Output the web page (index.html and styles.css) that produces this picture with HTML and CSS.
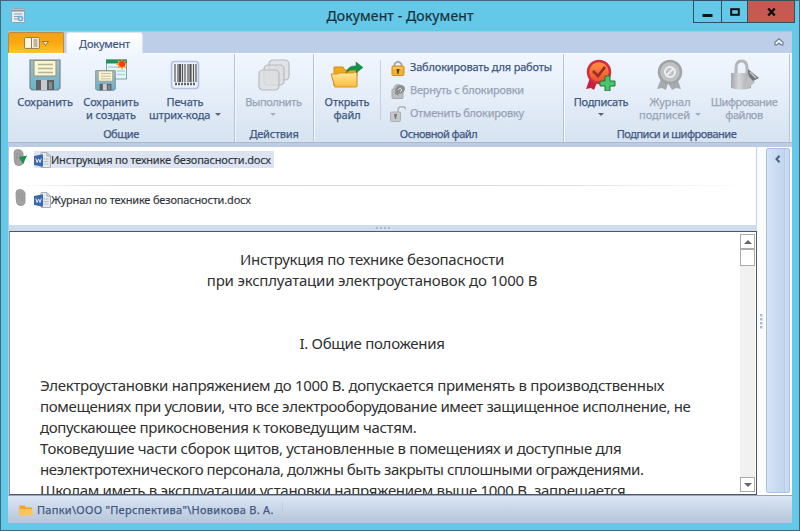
FILE: index.html
```html
<!DOCTYPE html>
<html lang="ru">
<head>
<meta charset="utf-8">
<title>Документ - Документ</title>
<link rel="stylesheet" href="styles.css">
</head>
<body>
<svg width="0" height="0" class="defs">
  <defs>
    <linearGradient id="steel" x1="0" y1="0" x2="0" y2="1"><stop offset="0" stop-color="#a9bcc4"/><stop offset="1" stop-color="#63b4cb"/></linearGradient>
    <linearGradient id="gold" x1="0" y1="0" x2="0" y2="1"><stop offset="0" stop-color="#ffe9a3"/><stop offset="1" stop-color="#fdbd3c"/></linearGradient>
    <linearGradient id="rosette" x1="0" y1="0" x2="0" y2="1"><stop offset="0" stop-color="#ff9445"/><stop offset="1" stop-color="#ee4b28"/></linearGradient>
    <linearGradient id="silver" x1="0" y1="0" x2="1" y2="0"><stop offset="0" stop-color="#a4a7ab"/><stop offset=".4" stop-color="#d5d7da"/><stop offset="1" stop-color="#9fa2a6"/></linearGradient>
    <symbol id="floppy" viewBox="0 0 32 32">
      <path d="M1 1h30v28l-2 2H3l-2-2z" fill="url(#steel)" stroke="#75868e" stroke-width="1.2"/>
      <path d="M5 1.5h22V17H5z" fill="#fbf6d0" stroke="#8c8f83"/>
      <path d="M9 5.500h15M9 9.500h15M9 13.500h15" stroke="#b5b39c" stroke-width="1.300"/>
      <path d="M7 21h18v10H7z" fill="#5d6164"/><path d="M12 21h6v10h-6z" fill="#c7cbce"/><path d="M20 23h3v7h-3z" fill="#8a8e91"/>
    </symbol>
    <symbol id="word" viewBox="0 0 17 16">
      <path d="M7 3V.5h6l3.500 3.500v11.500H7z" fill="#e6e8ea" stroke="#a8b0ba"/><path d="M13 1v3h3.500" fill="none" stroke="#9fa8b3"/>
      <path d="M9.500 7h5M9.500 9.500h5M9.500 12h5" stroke="#b6c0cc"/>
      <path d="M0 4l9-1.700v12.400L0 13z" fill="#3a68ac"/><path d="M1.800 6.500l1.300 4 1.500-3.500 1.400 3.500 1.300-4" fill="none" stroke="#e4ecf8" stroke-width="1"/>
    </symbol>
    <symbol id="clip" viewBox="0 0 11 17">
      <path d="M1 4q0-3.500 3.500-3.500Q9 .5 10 4v8.500q0 4-4.300 4-3.700 0-4.200-3.500z" fill="#a3a3a3" stroke="#8c8c8c" stroke-width=".8"/>
      <path d="M4 4v6M7 4v8" stroke="#8f8f8f" stroke-width="1"/>
    </symbol>
  </defs>
</svg>
<div class="window">
  <header class="titlebar">
    <svg class="appicon" width="14" height="15" viewBox="0 0 14 15"><rect x=".5" y=".5" width="13" height="14" rx="1" fill="#e7edef" stroke="#8fa8b3"/><path d="M1 2.500h12" stroke="#7e98a5" stroke-width="2"/><path d="M3 6h8M3 8.500h5M3 11h4" stroke="#8b9fab"/><circle cx="9.500" cy="10.500" r="2" fill="none" stroke="#6aa8ea" stroke-width="1.500"/></svg>
    <h1>Документ - Документ</h1>
    <div class="controls">
      <span class="min"><svg width="11" height="12"><path d="M.5 9.500h10" stroke="#111" stroke-width="3"/></svg></span>
      <span class="max"><svg width="10" height="8"><rect x="1.200" y="1.200" width="7.600" height="5.600" fill="none" stroke="#111" stroke-width="2"/></svg></span>
      <span class="close"><svg width="9" height="8" viewBox="0 0 9 8"><path d="M1.200.5l6.600 7M7.800.5l-6.600 7" stroke="#111" stroke-width="2.400"/></svg></span>
    </div>
  </header>
  <nav class="tabs">
    <div class="menu"><svg width="26" height="12" viewBox="0 0 26 12"><rect x=".6" y=".6" width="14.800" height="10.800" rx="1" fill="#fff7dd" stroke="#8e7950"/><path d="M7.500 1v10" stroke="#8e7950"/><path d="M9.500 3h4M9.500 5h4M9.500 7h4M9.500 9h4" stroke="#77705f"/><path d="M18.500 4.500h6l-3 4z" fill="#ffe39a" stroke="#8e7950"/></svg></div>
    <div class="tab"><span>Документ</span></div>
    <svg class="collapse" width="10" height="8" viewBox="0 0 10 8"><path d="M1 4.200l4-3.500 4 3.500v2.600H7L5 5 3 6.800H1z" fill="#f4f7fc" stroke="#75829a" stroke-width="1.200"/></svg>
  </nav>
  <section class="ribbon">
    <div class="group g1">
      <div class="buttons">
        <div class="btn"><svg width="32" height="32"><use href="#floppy"/></svg><p>Сохранить</p></div>
        <div class="btn"><svg width="32" height="32" viewBox="0 0 32 32"><rect x="11.500" y="1" width="20" height="19" fill="#e7f6f7" stroke="#6ca9b2"/><path d="M11 .5h21v4H11z" fill="#248e5c"/><path d="M13 8h14M22 12h8M22 15.500h8" stroke="#a9d8df" stroke-width="1.500"/><path d="M27 0l1.300 2.700L31 1l-.8 3L33 5l-2.800 1.500L31 9.500l-2.700-1.200L27 11l-1.500-2.700-3 1.200 1-3L20.500 5l3-1-1-3 3 1.700z" fill="#ff9a27"/><circle cx="27" cy="5" r="3" fill="#fa391a"/><svg x="0" y="11" width="21" height="21"><use href="#floppy"/></svg></svg><p>Сохранить<br>и создать</p></div>
        <div class="btn"><svg width="30" height="32" viewBox="0 0 30 32"><rect x="1.500" y="2.500" width="27" height="27" rx="3" fill="#eef1fa" stroke="#b0c1e3" stroke-width="1.600"/><path d="M5 5v18M8 5v18M12.500 5v18M15 5v18M18 5v18M23.500 5v18M26 5v18" stroke="#565656" stroke-width="1.200"/><path d="M10 5v18M20.500 5v18" stroke="#565656" stroke-width="2.200"/><path d="M5 25h21" stroke="#666" stroke-width="2.600" stroke-dasharray="2 1"/></svg><p>Печать<br>штрих-кода <i class="arrow wide"></i></p></div>
      </div>
      <div class="caption">Общие</div>
    </div>
    <div class="group g2">
      <div class="buttons">
        <div class="btn off"><svg width="32" height="32" viewBox="0 0 32 32"><g fill="#dcdedf" fill-opacity=".75" stroke="#b7babd" stroke-width="1.200"><rect x="11" y="1" width="20" height="20" rx="4"/><rect x="6" y="6" width="20" height="20" rx="4"/><rect x="1" y="11" width="20" height="20" rx="4"/></g></svg><p>Выполнить<br><i class="arrow"></i></p></div>
      </div>
      <div class="caption">Действия</div>
    </div>
    <div class="group g3">
      <div class="buttons">
        <div class="btn"><svg width="32" height="32" viewBox="0 0 32 32"><path d="M3 27V8h9l2 3h12v6" fill="#efaa1c" stroke="#d18d1b"/><path d="M0 15h6l2-1h14l1-1h3v14l-1 1H4z" fill="url(#gold)" stroke="#d9921f" stroke-width="1.100"/><path d="M15 14q2-8 10-7V3l7 5.500-7 5.500v-3q-6-1-10 3z" fill="#129343" stroke="#2a7b49" stroke-width=".5"/></svg><p>Открыть<br>файл</p></div>
        <div class="rows">
          <div class="row"><svg width="16" height="16" viewBox="0 0 16 16"><path d="M4.500 7V4q3.500-4.500 7 0v3" fill="none" stroke="#a6a9ac" stroke-width="2"/><rect x="2" y="6" width="12" height="9.500" rx="1" fill="#f3b12f" stroke="#d28d23"/><path d="M3 8h10" stroke="#ffd777"/><path d="M6.500 9h3l-1 5h-1z" fill="#553f20"/></svg><span class="r1">Заблокировать для работы</span></div>
          <div class="row off"><svg width="16" height="16" viewBox="0 0 16 16"><path d="M4.500 7V4q3.500-4.500 7 0v3" fill="none" stroke="#b3b5b8" stroke-width="2"/><rect x="2" y="6" width="11" height="9.500" rx="1" fill="#bebfc1" stroke="#a5a7a9"/><path d="M5 9q0-7 5-7 5 0 5 4-1 5-7 5l1 2-4-2z" fill="#8d8f91"/><path d="M8 7l2-2 2 2-2 2" stroke="#ddd" fill="none"/></svg><span class="r2">Вернуть с блокировки</span></div>
          <div class="row off"><svg width="16" height="16" viewBox="0 0 16 16"><path d="M8 7V3q1-2.500 4-2.500t4 3" fill="none" stroke="#b8babc" stroke-width="1.800"/><rect x=".5" y="6" width="10" height="9.500" rx="1" fill="#c6c7c9" stroke="#acaeb0"/><path d="M4 8h3l-1 5H5z" fill="#777"/></svg><span class="r2">Отменить блокировку</span></div>
        </div>
      </div>
      <div class="caption">Основной файл</div>
    </div>
    <div class="group g4">
      <div class="buttons">
        <div class="btn"><svg width="32" height="32" viewBox="0 0 32 32"><path d="M5 19L1 30l5-1 3 2 4-10zM20 20l2 10 4-5-3-8z" fill="#c71f3d"/><circle cx="14" cy="13" r="11" fill="url(#rosette)" stroke="#d12d3e" stroke-width="2.500"/><path d="M8 12l5 5 7-9" fill="none" stroke="#972d28" stroke-width="2.800"/><path d="M20 17h5v5h5v5h-5v5h-5v-5h-5v-5h5z" fill="#49c66b" stroke="#25733e"/></svg><p>Подписать<br><i class="arrow"></i></p></div>
        <div class="btn off"><svg width="32" height="32" viewBox="0 0 32 32"><path d="M7 20L3 30l5-1 4 2 2-7 4 7 4-2 5 1-4-11z" fill="#a8abad"/><circle cx="16" cy="13" r="11" fill="#bfc1c3" stroke="#a1a4a6" stroke-width="2.500"/><circle cx="16" cy="13" r="5" fill="none" stroke="#eceeef" stroke-width="2"/><path d="M12.500 16.500l7-7" stroke="#eceeef" stroke-width="2"/></svg><p>Журнал<br>подписей <i class="arrow wide"></i></p></div>
        <div class="btn off"><svg width="32" height="32" viewBox="0 0 32 32"><path d="M8 14V9q0-7 5.500-7T19 9v5" fill="none" stroke="#b4b6b9" stroke-width="3"/><path d="M3 14h20v15q-10 3-20 0z" fill="url(#silver)"/><path d="M14 30l7-15 6 8-7 7z" fill="#bcbec1"/><path d="M20 10l11 9-6 3q-6-5-5-12z" fill="#727579"/><path d="M22 13l6 6" stroke="#c9cbcd" stroke-width="1.500"/></svg><p>Шифрование<br>файлов</p></div>
      </div>
      <div class="caption">Подписи и шифрование</div>
    </div>
  </section>
  <main class="work">
    <div class="left">
      <ul class="files">
        <li class="current"><svg class="att" width="14" height="17" viewBox="0 0 14 17"><use href="#clip" width="11" height="17"/><path d="M6 8l8-1.500-4 9z" fill="#159447"/></svg><span class="file"><svg width="17" height="16"><use href="#word"/></svg><b class="f1">Инструкция по технике безопасности.docx</b></span></li>
        <li><svg class="att second" width="14" height="17"><use href="#clip" width="11" height="17"/></svg><span class="file"><svg width="17" height="16"><use href="#word"/></svg><b class="f2">Журнал по технике безопасности.docx</b></span></li>
      </ul>
      <div class="splitter"><i></i><i></i><i></i><i></i></div>
      <article class="doc">
        <div class="page">
          <p class="c l1">Инструкция по технике безопасности</p>
          <p class="c l2">при эксплуатации электроустановок до 1000 В</p>
          <p class="c l3">I. Общие положения</p>
          <p class="l4">Электроустановки напряжением до 1000 В. допускается применять в производственных</p>
          <p class="l5">помещениях при условии, что все электрооборудование имеет защищенное исполнение, не</p>
          <p class="l6">допускающее прикосновения к токоведущим частям.</p>
          <p class="l7">Токоведушие части сборок щитов, установленные в помещениях и доступные для</p>
          <p class="l8">неэлектротехнического персонала, должны быть закрыты сплошными ограждениями.</p>
          <p class="l9">Школам иметь в эксплуатации установки напряжением выше 1000 В. запрещается</p>
        </div>
        <div class="scroll"><span class="sb"><i class="up"></i></span><span class="thumb"></span><span class="sb end"><i class="down"></i></span></div>
      </article>
    </div>
    <div class="vsplit"><i></i><i></i><i></i><i></i></div>
    <aside class="side"><svg width="6" height="8" viewBox="0 0 6 8"><path d="M4.500.8L1.500 4l3 3.200" fill="none" stroke="#4d6084" stroke-width="2"/></svg></aside>
  </main>
  <footer class="status"><svg width="14" height="12" viewBox="0 0 14 12"><path d="M.5 11V1.500h5l1.500 2h6V11z" fill="#f3a51f"/><path d="M.5 5h13v6.500H.5z" fill="#ffc457"/></svg><span>Папки\ООО "Перспектива"\Новикова В. А.</span></footer>
</div>
</body>
</html>
```
FILE: styles.css
```css
* { box-sizing: border-box; }
body { margin: 0; font-family: "Noto Sans", sans-serif; font-size: 11px; color: #3f587f; overflow: hidden; }
p, h1, ul { margin: 0; padding: 0; }
svg { display: block; flex: none; }
.defs { position: absolute; }
.window { width: 800px; height: 531px; border: 1px solid #426977; background: #64c9e9; padding: 0 7px 7px; display: flex; flex-direction: column; }

.titlebar { height: 30px; flex: none; display: flex; justify-content: center; position: relative; }
.titlebar h1 { font-size: 14px; font-weight: 400; line-height: 30px; color: #17313b; letter-spacing: .1px; -webkit-text-stroke: .2px; }
.appicon { position: absolute; left: 3px; top: 7px; }
.controls { position: absolute; right: -3px; top: -1px; height: 23px; display: flex; border: 1px solid #2c5361; }
.controls span { display: flex; align-items: center; justify-content: center; border-right: 1px solid #2c5361; }
.controls .min { width: 28px; }
.controls .max { width: 26px; }
.controls .close { width: 46px; background: #c75a50; border: 0; }

.tabs { height: 22px; flex: none; background: #bdcee8; border-top: 1px solid #b4c2da; display: flex; align-items: stretch; position: relative; }
.menu { width: 56px; background: linear-gradient(#efa31d, #fba60e 45%, #ffc52e); border: 1px solid #bd8b3c; border-bottom: 0; border-radius: 2px 2px 0 0; display: flex; align-items: center; justify-content: center; padding-left: 2px; }
.tab { width: 77px; margin-left: 2px; margin-bottom: -1px; background: linear-gradient(#fff, #f0f6fe); border: 1px solid #d9e5f6; border-bottom: 0; border-radius: 3px 3px 0 0; line-height: 21px; text-align: center; z-index: 1; letter-spacing: -.2px; -webkit-text-stroke: .2px; }
.collapse { position: absolute; right: 8px; top: 6px; }

.ribbon { height: 90px; flex: none; display: flex; background: linear-gradient(#f0f6fe, #e4edf8 50%, #d7e3f1); border-top: 1px solid #fafcff; border-bottom: 1px solid #a8b9d0; }
.group { display: flex; flex-direction: column; border-right: 1px solid #b5c4d9; box-shadow: 1px 0 #f2f7fd; }
.g1 { width: 227px; }
.g2 { width: 79px; }
.g3 { width: 250px; }
.g4 { width: 226px; }
.buttons { height: 71px; display: flex; }
.g1 .buttons { padding-left: 4px; }
.btn { width: 66px; padding-top: 5px; text-align: center; display: flex; flex-direction: column; align-items: center; line-height: 13px; white-space: nowrap; letter-spacing: -.1px; -webkit-text-stroke: .25px; }
.btn p { margin-top: 4px; }
.g1 .btn:nth-child(3) { width: 82px; }
.g2 .btn { width: 77px; letter-spacing: -.4px; }
.g4 .btn { width: 74px; letter-spacing: -.3px; }
.g4 .btn:nth-child(2) { width: 64px; letter-spacing: -.05px; }
.g4 .btn:nth-child(3) { width: 84px; letter-spacing: -.5px; }
.off { color: #98a4b5; }
.arrow { display: inline-block; border: 3px solid transparent; border-top: 3px solid #56657c; border-bottom: 0; vertical-align: 3px; margin-left: 3px; }
.off .arrow { border-top-color: #a5afbd; }
.arrow.wide { margin-left: 2px; }
.btn br + .arrow:not(.wide) { margin-left: 0; }
.caption { text-align: center; line-height: 18px; height: 17px; letter-spacing: -.5px; -webkit-text-stroke: .25px; }
.g1 .caption { letter-spacing: -.4px; }
.g2 .caption { letter-spacing: -.2px; }
.rows { border-left: 1px solid #c3d0e2; margin-top: 6px; height: 60px; padding-left: 9px; display: flex; flex-direction: column; gap: 7px; }
.row { display: flex; align-items: center; height: 16px; gap: 4px; white-space: nowrap; -webkit-text-stroke: .25px; }
.row span { margin-top: -3px; }
.r1 { letter-spacing: -.17px; }
.r2 { letter-spacing: -.25px; }

.work { flex: 1; display: flex; background: #fff; border-top: 4px solid #bccce2; min-height: 0; }
.left { width: 749px; padding-left: 1px; display: flex; flex-direction: column; background: #b9cbe2; }
.files { height: 78px; flex: none; background: #fff; list-style: none; padding: 2px 0 0 4px; border-right: 1px solid #c6d3e7; }
.files li { height: 40px; display: flex; align-items: flex-start; gap: 7px; position: relative; }
.files .current::after { content: ""; position: absolute; left: 0; right: 5px; bottom: 3px; height: 1px; background: linear-gradient(90deg, #fff, #d6d6d8 15%, #dcdcde 70%, #fff); }
.att.second { margin-left: 2px; margin-right: -2px; }
.file { display: flex; align-items: center; height: 17px; margin-top: 2px; color: #30343b; padding-right: 3px; white-space: nowrap; }
.file b { font-weight: 400; -webkit-text-stroke: .15px; }
.f1 { letter-spacing: -.2px; }
.f2 { letter-spacing: -.17px; }
.current .file { background: #dbe4f0; }
.splitter { height: 6px; flex: none; background: #cedded; display: flex; justify-content: center; align-items: center; gap: 1px; }
.splitter i, .vsplit i { width: 3px; height: 3px; background: #a7b9d4; border-right: 1px solid #d7e2f0; border-bottom: 1px solid #d7e2f0; }
.doc { flex: 1; min-height: 0; background: #fff; border: 1px solid #52575e; border-left-color: #8a95a3; display: flex; overflow: hidden; }
.page { width: 730px; padding: 17px 36px 0 30px; color: #303030; font-size: 15px; line-height: 21px; white-space: nowrap; }
.c { text-align: center; }
.l1 { letter-spacing: -.26px; }
.l2 { letter-spacing: -.19px; }
.l3 { margin: 42px 0 21px; letter-spacing: -.28px; }
.l4 { letter-spacing: -.3px; }
.l5 { letter-spacing: -.35px; }
.l6 { letter-spacing: -.34px; }
.l7 { letter-spacing: -.31px; }
.l8 { letter-spacing: -.43px; }
.l9 { letter-spacing: -.3px; }
.scroll { width: 15px; background: #f1f1f1; margin: 2px 1px 2px 0; display: flex; flex-direction: column; }
.sb { width: 15px; height: 15px; border: 1px solid #ababab; background: #fff; display: flex; align-items: center; justify-content: center; }
.thumb { height: 17px; border: 1px solid #ababab; background: #fff; }
.end { margin-top: auto; }
.up, .down { border: 4px solid transparent; border-bottom: 4px solid #666; border-top: 0; }
.down { border-top: 4px solid #666; border-bottom: 0; }
.vsplit { width: 9px; display: flex; flex-direction: column; align-items: center; justify-content: center; gap: 1px; background: #fafcff; }
.side { width: 24px; margin: 1px 0 2px; border: 1px solid #adc0dd; border-radius: 2px; background: linear-gradient(90deg, #d5e3f5, #c2d6f0 78%, #b4c9e7 80%, #cbdcf3 83%, #c5d8f1); display: flex; justify-content: center; padding-top: 6px; }
.status { height: 28px; flex: none; background: linear-gradient(#dbe6f4, #b6c5da); border-top: 1px solid #8fa7c8; display: flex; align-items: center; gap: 4px; padding-left: 11px; }
.status span { border-right: 1px solid #c1cee0; padding-right: 8px; letter-spacing: .29px; -webkit-text-stroke: .25px; }
```
